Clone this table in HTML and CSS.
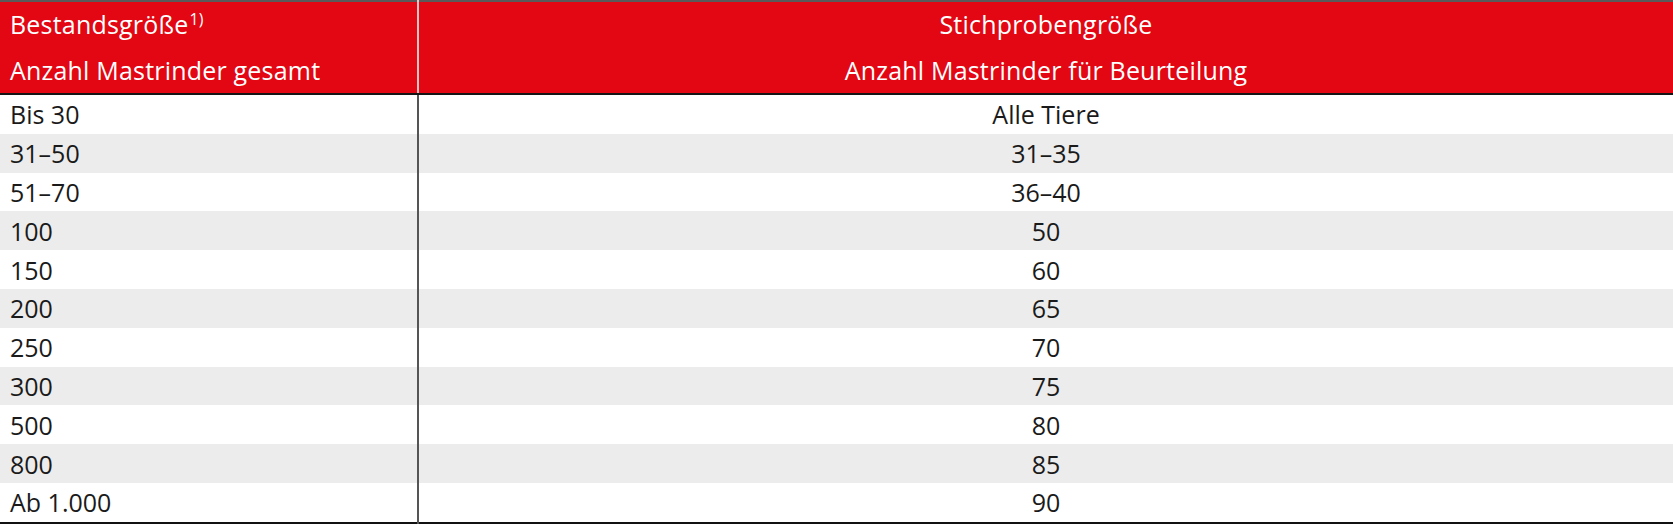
FILE: index.html
```html
<!DOCTYPE html>
<html lang="de">
<head>
<meta charset="utf-8">
<title>Stichprobengröße</title>
<link rel="stylesheet" href="styles.css">
</head>
<body>
<table class="tbl">
  <thead>
    <tr>
      <th class="col-a"><div class="hl">Bestandsgröße<sup class="fn">1)</sup></div><div class="hl">Anzahl Mastrinder gesamt</div></th>
      <th class="col-b"><div class="hl">Stichprobengröße</div><div class="hl">Anzahl Mastrinder für Beurteilung</div></th>
    </tr>
  </thead>
  <tbody>
    <tr><td class="col-a">Bis 30</td><td class="col-b">Alle Tiere</td></tr>
    <tr class="alt"><td class="col-a">31–50</td><td class="col-b">31–35</td></tr>
    <tr><td class="col-a">51–70</td><td class="col-b">36–40</td></tr>
    <tr class="alt"><td class="col-a">100</td><td class="col-b">50</td></tr>
    <tr><td class="col-a">150</td><td class="col-b">60</td></tr>
    <tr class="alt"><td class="col-a">200</td><td class="col-b">65</td></tr>
    <tr><td class="col-a">250</td><td class="col-b">70</td></tr>
    <tr class="alt"><td class="col-a">300</td><td class="col-b">75</td></tr>
    <tr><td class="col-a">500</td><td class="col-b">80</td></tr>
    <tr class="alt"><td class="col-a">800</td><td class="col-b">85</td></tr>
    <tr><td class="col-a">Ab 1.000</td><td class="col-b">90</td></tr>
  </tbody>
</table>
</body>
</html>
```
FILE: styles.css
```css
html, body {
  margin: 0;
  padding: 0;
  background: #ffffff;
}
body {
  font-family: "Open Sans", "Noto Sans", "Liberation Sans", sans-serif;
  color: #1a1a1a;
}
.tbl {
  width: 100%;
  border-collapse: collapse;
  border-top: 2px solid #5a5a5a;
  border-bottom: 2px solid #111111;
  table-layout: fixed;
}
.tbl thead th {
  background: #e30613;
  color: #ffffff;
  font-weight: 500;
  font-size: 25px;
  letter-spacing: 0.2px;
  height: 91px;
  padding: 0;
  vertical-align: middle;
  border-bottom: 2px solid #151515;
}
.tbl thead th.col-b {
  border-left: 2px solid #f3c4c6;
}
.hl {
  height: 45.5px;
  line-height: 45.5px;
  white-space: nowrap;
}
.fn {
  font-size: 16px;
  vertical-align: 0;
  position: relative;
  top: -9px;
  margin-left: 1px;
}
.col-a {
  width: 407px;
  text-align: left;
  padding-left: 10px !important;
}
.col-b {
  text-align: center;
}
.tbl tbody td {
  height: 38.8px;
  padding: 0;
  font-size: 25px;
  line-height: 38px;
  vertical-align: middle;
}
.tbl tbody td.col-b {
  border-left: 2px solid #555555;
}
.tbl tbody tr.alt td {
  background: #ececec;
}
```
